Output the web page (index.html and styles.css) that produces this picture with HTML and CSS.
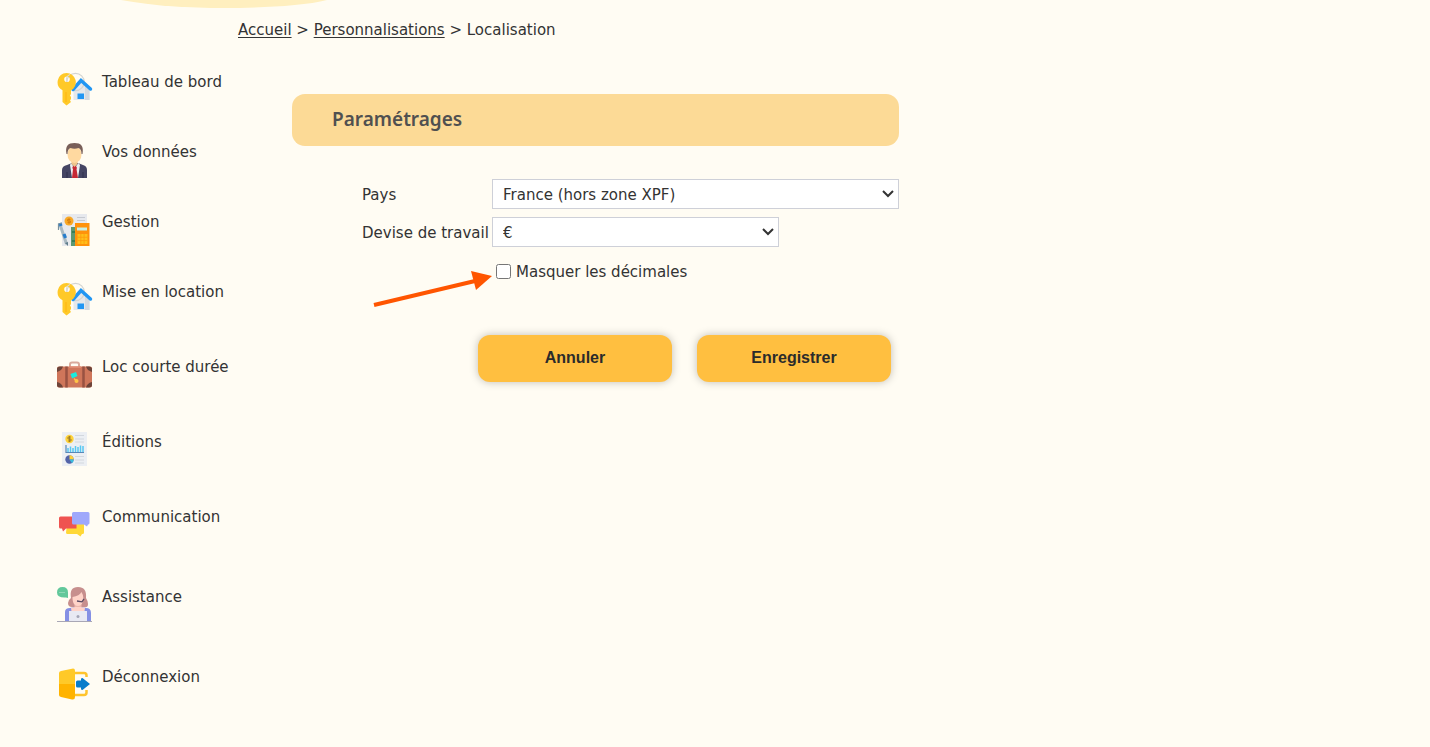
FILE: index.html
```html
<!DOCTYPE html>
<html lang="fr">
<head>
    <meta charset="UTF-8">
    <meta name="viewport" content="width=device-width, initial-scale=1.0">
    <title>Localisation</title>
    <link rel="stylesheet" href="styles.css">
</head>
<body>
    <!-- Shared icon: key and house -->
    <svg class="sprite" aria-hidden="true">
        <symbol id="icon-key" viewBox="0 0 36 36">
            <path d="M16.500 17.500L24.500 9l8 8.500V28h-16z" fill="#e4e8ec"/>
            <path d="M28 14l4.500 4v10H28z" fill="#d5d9de"/>
            <circle cx="18.500" cy="10" r="8.700" fill="none" stroke="#d4d4d1" stroke-width="1.200"/>
            <path d="M16 17.500L24 8.500l9.500 8.500" fill="none" stroke="#2196f3" stroke-width="3.400" stroke-linecap="round"/>
            <path d="M20.500 21.500h6.500v5.500h-6.500z" fill="#2196f3"/>
            <path fill-rule="evenodd" d="M9.500 1a9.200 9.200 0 0 1 4.500 17.300V22l-1 1.500 1 1.500v2l-1 1.500 1 1.500-4.500 3.500L5.500 30V18.300A9.200 9.200 0 0 1 9.500 1zm.5 3.500a2.800 2.800 0 1 0 0 5.600 2.800 2.800 0 0 0 0-5.600z" fill="#ffc928"/>
            <path d="M10 9.500a5 5 0 0 1 3-7" fill="none" stroke="#dcdcd2" stroke-width="1.200"/>
            <path d="M9 20v10" stroke="#ffb814" stroke-width="1.200"/>
        </symbol>
    </svg>

    <header class="banner">
        <svg class="banner-shape" viewBox="0 0 210 9" aria-hidden="true">
            <path d="M2 0C35 6 70 8 105 8S185 6 208 0z" fill="#ffefbf"/>
        </svg>
    </header>

    <nav class="breadcrumb" aria-label="Fil d'Ariane">
        <a href="#">Accueil</a> &gt; <a href="#">Personnalisations</a> &gt; <span>Localisation</span>
    </nav>

    <div class="page">
        <nav class="menu" aria-label="Menu">
            <a href="#" class="menu-item">
                <svg class="menu-icon"><use href="#icon-key"/></svg>
                <span>Tableau de bord</span>
            </a>
            <a href="#" class="menu-item">
                <svg class="menu-icon" viewBox="0 0 36 36">
                    <path d="M5 36v-8q0-4 5-5l5-2h6l5 2q4 1 4 5v8z" fill="#454563"/>
                    <path d="M14 21l3.500 5 4-5 1.500 2-2 13h-6l-2-13z" fill="#eceff1"/>
                    <path d="M16 24h3l1 2-.5 1L21 36h-6l1-9-.7-1z" fill="#c62834"/>
                    <path d="M14.500 17h6v5l-3 3-3-3z" fill="#eec58c"/>
                    <ellipse cx="17.500" cy="12.500" rx="7" ry="8.500" fill="#ffd9a0"/>
                    <path d="M9.500 12C8 4 11 1 17.500 1S27 4 25.500 12l-1 0q0-5-3-6-4 1.500-8 0-3 1-3 6z" fill="#795f58"/>
                    <path d="M10 30v6M26 30v6" stroke="#30304d"/>
                </svg>
                <span>Vos données</span>
            </a>
            <a href="#" class="menu-item">
                <svg class="menu-icon" viewBox="0 0 36 36">
                    <path d="M5 2h25v32H5z" fill="#e7e9ed"/>
                    <path d="M20 5.500h8M20 8.500h8" stroke="#c7cad0"/>
                    <circle cx="12" cy="9" r="4.500" fill="#f9a825"/>
                    <path d="M13.500 7.500h-3v1.500h3v1.500h-3M12 6v6" fill="none" stroke="#d47b09" stroke-width=".8"/>
                    <path d="M14 15h5v19h-5z" fill="#5c9872"/>
                    <path d="M15 20h3M15 29h3" stroke="#397d57" stroke-width="2"/>
                    <path d="M18 11h14.500v23H18z" fill="#ff920b"/>
                    <path d="M20 15.500h10v3H20z" fill="#c9eee1"/>
                    <path d="M20.500 22h10v10h-10z" fill="#ffbf1a"/>
                    <path d="M20.500 25.300h10M20.500 28.600h10M23.800 22v10M27.100 22v10" stroke="#ff9a0b" stroke-width=".8"/>
                    <path d="M3 12.500L9.500 32" stroke="#a9b8c0" stroke-width="3"/>
                    <path d="M3 11l1 3M7 22l1.500 4" stroke="#277dcc" stroke-width="3.200"/>
                    <path d="M5 11l-3.500 1v6" fill="none" stroke="#7892a0" stroke-width="1.200"/>
                    <path d="M8 31l3-1 0 4z" fill="#607d8b"/>
                </svg>
                <span>Gestion</span>
            </a>
            <a href="#" class="menu-item menu-item-medium">
                <svg class="menu-icon"><use href="#icon-key"/></svg>
                <span>Mise en location</span>
            </a>
            <a href="#" class="menu-item menu-item-medium">
                <svg class="menu-icon" viewBox="0 0 36 36">
                    <path d="M13 10V7.500q0-2 2-2h5q2 0 2 2V10" fill="none" stroke="#d9aa9b" stroke-width="2"/>
                    <rect y="9.500" width="35" height="21" rx="2" fill="#cf765a"/>
                    <path d="M9.500 9.500v21M26.500 9.500v21" stroke="#995242" stroke-width="2.500"/>
                    <path d="M0 15v-3q0-2.500 3-2.500h3q-1 4-6 5.500zM29 9.500h3q3 0 3 2.500v3q-5-1.500-6-5.500zM0 25q5 1 6 5.500H3q-3 0-3-2.500zM35 25q-5 1-6 5.500h3q3 0 3-2.500z" fill="#6e4439"/>
                    <path d="M13.500 17l5.500-2 1.500 4-5.500 2.500z" fill="#18edde"/>
                    <circle cx="19.500" cy="24" r="2" fill="#ffc447"/>
                    <path d="M17 21.500l2 2" stroke="#ffc447" stroke-width="1.500"/>
                    <path d="M12 10h12" stroke="#e39179" stroke-width="1.500"/>
                </svg>
                <span>Loc courte durée</span>
            </a>
            <a href="#" class="menu-item menu-item-medium">
                <svg class="menu-icon" viewBox="0 0 36 36">
                    <path d="M5 0h25v34H5z" fill="#eceff3"/>
                    <circle cx="12.500" cy="7" r="4.200" fill="#ffd238"/>
                    <path d="M14 5h-3v2h3v2h-3M12.500 4v6" fill="none" stroke="#9b7a26" stroke-width=".9"/>
                    <path d="M18 3.500h9M18 7h9M18 10h9M18 24.500h9M18 28h9M18 31h9" stroke="#d3d8de"/>
                    <path d="M9 13v7.500h18" fill="none" stroke="#5887b7" stroke-width="1.200"/>
                    <path d="M11 16v4M13.500 14.500V20M16 16v4M18.500 14v6M21 15v5M23.500 13.500V20M26 14v6" stroke="#55c7f2" stroke-width="1.500"/>
                    <circle cx="12.500" cy="27.500" r="4.200" fill="#5363a8"/>
                    <path d="M12.500 27.500v-4.200a4.200 4.200 0 0 1 4.200 4.200z" fill="#ffd238"/>
                    <path d="M12.500 27.500h4.200q0 2.500-1.800 3.500z" fill="#39bddf"/>
                </svg>
                <span>Éditions</span>
            </a>
            <a href="#" class="menu-item menu-item-large">
                <svg class="menu-icon" viewBox="0 0 36 36">
                    <path d="M10 17h17v8.500q0 1.500-1.500 1.500H25l-1.500 2.500L20 27h-9.500Q9 27 9 25.500z" fill="#ffd837"/>
                    <path d="M3.500 9.500h16v12H9l-3 3-1-3H3.500Q2 21.500 2 20v-9q0-1.500 1.500-1.500z" fill="#ef5350"/>
                    <path d="M16.500 5h14.500q1.500 0 1.500 1.500V16q0 1.500-1.500 1.500l-1 2-3-2H16.500q-1.500 0-1.500-1.500V6.500Q15 5 16.500 5z" fill="#9fa8fb"/>
                </svg>
                <span>Communication</span>
            </a>
            <a href="#" class="menu-item menu-item-large">
                <svg class="menu-icon" viewBox="0 0 36 36">
                    <path d="M5.500 0q5.500 0 5.500 5.500V11l-2-.5Q0 11 0 5.500 0 0 5.500 0z" fill="#62c89b"/>
                    <path d="M2.500 5.500h6" stroke="#bce8d1" stroke-dasharray="1 1"/>
                    <path d="M14 11Q12 0 21 0t8 11q2 3 2 6 0 4-4 3H15q-4 0-4-4 0-3 3-5z" fill="#c78f8d"/>
                    <path d="M17.500 15h7v7h-7z" fill="#edb9ae"/>
                    <path d="M15.500 10q7-1 9-5 2 3 2 7-1 7-5.500 7-5 0-5.500-7z" fill="#ffd3c8"/>
                    <path d="M20 14l5 .8 2-3" fill="none" stroke="#5a4a61" stroke-width="1.300"/>
                    <path d="M8 34.500V25q0-4 5-4l5-1h6l5 1q5 0 5 5v8.500z" fill="#8590e4"/>
                    <path d="M14 21l4-1h6l4 1-1 6H15z" fill="#ffd3c8"/>
                    <path d="M12 24h18v10.500H12z" fill="#e8e9f3"/>
                    <circle cx="21" cy="29.500" r="1.500" fill="#a3a5b7"/>
                    <path d="M0 34.500h35" stroke="#a9a7b5"/>
                </svg>
                <span>Assistance</span>
            </a>
            <a href="#" class="menu-item menu-item-large">
                <svg class="menu-icon" viewBox="0 0 36 36">
                    <path d="M18 6h9q2.500 0 2.500 2.500V10M18 28h9q2.500 0 2.500-2.500V23" fill="none" stroke="#ffc42c" stroke-width="2.500"/>
                    <path d="M2 17V6q0-1.500 2-2l11-2.300q3-.7 3 2V17z" fill="#ffc928"/>
                    <path d="M2 17h16v13q0 3-3 2.500L4 30q-2-.5-2-2z" fill="#ffb300"/>
                    <path d="M20.500 13.500q-1.500 0-1.500 1.500v4q0 1.500 1.500 1.500H24v2l1.500.5L33 17l-7.500-6-1.500.5v2z" fill="#087ccb"/>
                </svg>
                <span>Déconnexion</span>
            </a>
        </nav>

        <main class="content">
            <h1 class="section-title">Paramétrages</h1>

            <form class="settings">
                <div class="form-row">
                    <label class="form-label" for="pays">Pays</label>
                    <select class="form-select" id="pays">
                        <option>France (hors zone XPF)</option>
                    </select>
                </div>
                <div class="form-row">
                    <label class="form-label" for="devise">Devise de travail</label>
                    <select class="form-select form-select-small" id="devise">
                        <option>€</option>
                    </select>
                </div>
                <div class="check-row">
                    <input type="checkbox" id="decimales">
                    <label for="decimales">Masquer les décimales</label>
                    <svg class="arrow" viewBox="0 0 120 38" aria-hidden="true">
                        <path d="M2 35L103 11" stroke="#ff5500" stroke-width="4"/>
                        <path d="M99 1l21 5-16 14z" fill="#ff5500"/>
                    </svg>
                </div>
                <div class="actions">
                    <button type="button" class="btn">Annuler</button>
                    <button type="submit" class="btn">Enregistrer</button>
                </div>
            </form>
        </main>
    </div>
</body>
</html>
```
FILE: styles.css
```css
* {
    margin: 0;
    padding: 0;
    box-sizing: border-box;
}

body {
    font-family: Verdana, "DejaVu Sans", sans-serif;
    font-size: 15px;
    line-height: 20px;
    background: #fffcf3;
    color: #333;
}

.sprite {
    display: none;
}

.banner {
    height: 20px;
    padding-left: 119px;
}

.banner-shape {
    display: block;
    width: 210px;
    height: 9px;
}

.breadcrumb {
    padding-left: 238px;
}

.breadcrumb a {
    color: inherit;
    text-underline-offset: 2px;
}

.page {
    display: flex;
    padding: 30px 24px 0 57px;
}

.menu {
    flex: 0 0 235px;
    display: flex;
    flex-direction: column;
}

.menu-item {
    display: flex;
    gap: 9px;
    height: 70px;
    padding-top: 2px;
    color: inherit;
    text-decoration: none;
}

.menu-item-medium {
    height: 75px;
}

.menu-item-large {
    height: 80px;
}

.menu-icon {
    flex: none;
    width: 36px;
    height: 36px;
}

.content {
    flex: 1;
    max-width: 607px;
    padding-top: 24px;
}

.section-title {
    padding: 11px 40px 13px;
    border-radius: 13px;
    background: #fcda96;
    color: #505050;
    font-family: "Noto Sans", "Open Sans", sans-serif;
    font-size: 19px;
    font-weight: 600;
    line-height: 28px;
}

.settings {
    padding: 33px 0 0 70px;
}

.form-row {
    display: flex;
    align-items: center;
    margin-bottom: 8px;
}

.form-label {
    flex: 0 0 130px;
    padding-top: 2px;
    white-space: nowrap;
}

.form-select {
    flex: 1;
    height: 30px;
    padding: 1px 30px 0 10px;
    border: 1px solid #ced0d8;
    border-radius: 0;
    appearance: none;
    background: #fff url("data:image/svg+xml,%3Csvg xmlns='http://www.w3.org/2000/svg' width='12' height='8'%3E%3Cpath d='M1 1l5 5 5-5' fill='none' stroke='%23333' stroke-width='2'/%3E%3C/svg%3E") no-repeat right 4px center;
    color: #333;
    font: inherit;
}

.form-select-small {
    flex: 0 0 287px;
}

.check-row {
    position: relative;
    display: flex;
    align-items: center;
    gap: 5px;
    padding: 7px 0 0 134px;
}

.check-row input {
    width: 15px;
    height: 15px;
    margin-bottom: 1px;
}

/* Arrow pointing at the checkbox */
.arrow {
    position: absolute;
    left: 10px;
    top: 15px;
    width: 120px;
    height: 38px;
}

.actions {
    display: flex;
    justify-content: flex-end;
    gap: 25px;
    padding: 53px 8px 0 0;
}

.btn {
    width: 194px;
    height: 47px;
    padding-bottom: 2px;
    border: 0;
    border-radius: 12px;
    background: #ffbf40;
    box-shadow: 0 0 8px rgba(0, 0, 0, 0.25);
    color: #2b2b2b;
    font: bold 16px "Liberation Sans", Arial, sans-serif;
    cursor: pointer;
}
```
